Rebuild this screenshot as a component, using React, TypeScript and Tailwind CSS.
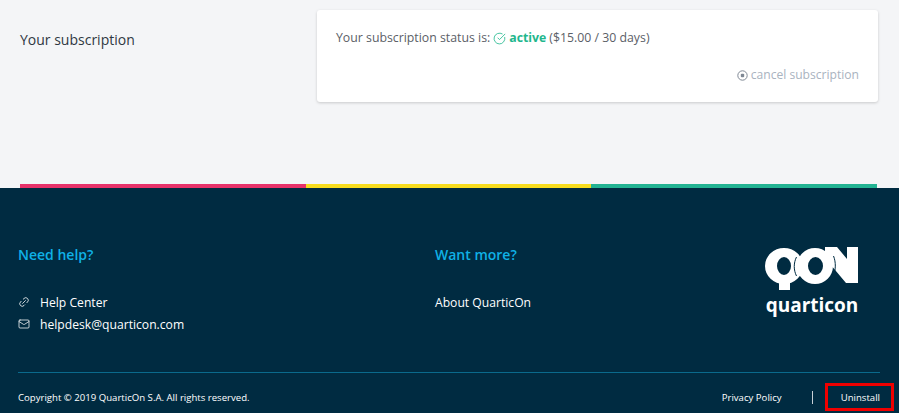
import { CircleCheckBig, Link2, Mail } from 'lucide-react'

function Logo() {
  return (
    <div className="flex flex-col items-center">
      <svg width="94" height="45" viewBox="0 0 94 45" fill="none">
        <path
          fillRule="evenodd"
          d="M0 20a19 18 0 1 0 38 0a19 18 0 1 0 -38 0zM12 20a7 9 0 1 0 14 0a7 9 0 1 0 -14 0z"
          fill="white"
        />
        <rect x="14" y="32" width="11" height="12" fill="white" />
        <path d="M60 1h12l20 24V1h1v36H81L60 12z" fill="white" />
        <rect x="82" y="1" width="11" height="36" fill="white" />
        <path
          fillRule="evenodd"
          d="M32 20a18 18 0 1 0 36 0a18 18 0 1 0 -36 0zM43 20a7.5 9 0 1 0 15 0a7.5 9 0 1 0 -15 0z"
          fill="white"
        />
        <path d="M31.5 11c-3 6 -3 13 0 19" stroke="#002b41" strokeWidth="1" />
        <path d="M68.500 10c2.500 6 2.500 14 -.5 21" stroke="#002b41" strokeWidth="1" />
      </svg>
      <span className="mt-[3px] text-[19px] leading-[22px] font-bold text-white">quarticon</span>
    </div>
  )
}

export default function App() {
  return (
    <div className="h-[413px] w-[899px] overflow-hidden bg-[#f4f5f7] font-['Open_Sans',sans-serif]">
      {/* Subscription */}
      <div className="flex h-[184px] items-start pl-[20px] pt-[10px]">
        <h2 className="w-[297px] pt-[20px] text-[14px] leading-[20px] font-medium text-[#2f3842]">Your subscription</h2>
        <div className="h-[92px] w-[561px] rounded-[3px] bg-white px-[19px] pt-[19px] shadow-[0_1px_3px_rgba(0,0,0,0.18)]">
          <p className="flex items-center text-[12.3px] leading-[18px] text-[#5b6067]">
            <span>Your subscription status is:</span>
            <CircleCheckBig className="mx-[3px] size-[13px] text-[#1fb78d]" strokeWidth={1.5} />
            <span className="font-bold text-[#1fb78d]">active</span>
            <span className="ml-[3px]">($15.00 / 30 days)</span>
          </p>
          <div className="mt-[19px] flex items-center justify-end text-[12.1px] leading-[18px] text-[#a9b3c0]">
            <svg width="11" height="11" viewBox="0 0 11 11" fill="none" className="mr-[3px]">
              <circle cx="5.5" cy="5.5" r="4.7" stroke="#7f8894" strokeWidth="1" />
              <rect x="3.8" y="3.8" width="3.4" height="3.4" rx="1" fill="#7f8894" />
            </svg>
            <span>cancel subscription</span>
          </div>
        </div>
      </div>

      {/* Stripes */}
      <div className="flex h-[4px] pl-[20px] pr-[22px]">
        <div className="flex-1 bg-[#e8326a]" />
        <div className="flex-1 bg-[#f7dc1e]" />
        <div className="flex-1 bg-[#23b393]" />
      </div>

      {/* Footer */}
      <footer className="h-[225px] bg-[#002b41] pl-[18px] pr-[19px] text-white">
        <div className="flex h-[184px] items-start">
          <div className="w-[417px] pt-[57px]">
            <h3 className="text-[14px] leading-[20px] font-semibold text-[#0fb1e6]">Need help?</h3>
            <div className="mt-[27px] flex items-center gap-[10px] text-[12.15px] leading-[22px] font-medium">
              <Link2 className="-mt-[2px] size-[12px] -rotate-45" strokeWidth={1.5} />
              <span>Help Center</span>
            </div>
            <div className="flex items-center gap-[10px] text-[12.15px] leading-[22px] font-medium">
              <Mail className="-mt-[2px] size-[12px]" strokeWidth={1.5} />
              <span>helpdesk@quarticon.com</span>
            </div>
          </div>
          <div className="w-[330px] pt-[57px]">
            <h3 className="text-[14px] leading-[20px] font-semibold text-[#0fb1e6]">Want more?</h3>
            <p className="mt-[27px] text-[12.15px] leading-[22px] font-medium">About QuarticOn</p>
          </div>
          <div className="pt-[58px]">
            <Logo />
          </div>
        </div>
        <div className="flex h-[41px] items-center justify-between border-t border-[#0a6a8c] pt-[10px] text-[9.6px] font-medium">
          <span>Copyright © 2019 QuarticOn S.A. All rights reserved.</span>
          <div className="flex items-center">
            <span>Privacy Policy</span>
            <span className="ml-[30px] mr-[28px] h-[13px] w-px bg-[#c8d0d6]" />
            <span className="relative">
              Uninstall
              <span className="absolute -left-[16px] -right-[14px] -top-[8px] -bottom-[6px] border-[3px] border-[#f00000]" />
            </span>
          </div>
        </div>
      </footer>
    </div>
  )
}
